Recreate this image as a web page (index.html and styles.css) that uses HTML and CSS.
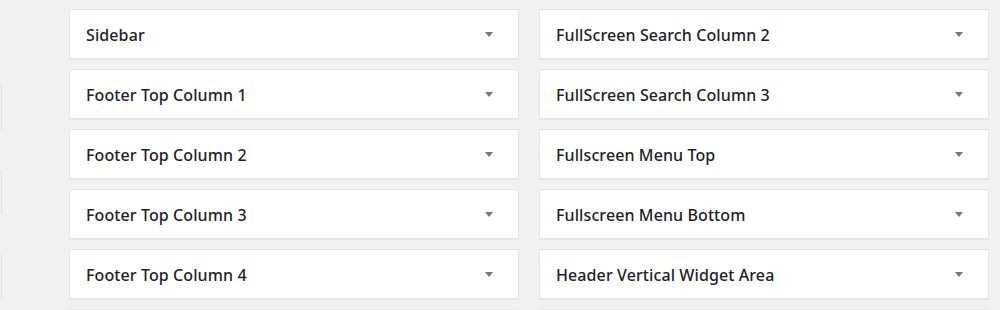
FILE: index.html
```html
<!DOCTYPE html>
<html>
<head>
<meta charset="utf-8">
<link rel="stylesheet" href="styles.css">
</head>
<body>
<div class="page">
  <div class="edge">
    <div class="edge-item e1"></div>
    <div class="edge-item"></div>
    <div class="edge-item"></div>
  </div>
  <div class="grid">
    <div class="col">
      <div class="card"><h2>Sidebar</h2><span class="arrow"></span></div>
      <div class="card"><h2>Footer Top Column 1</h2><span class="arrow"></span></div>
      <div class="card"><h2>Footer Top Column 2</h2><span class="arrow"></span></div>
      <div class="card"><h2>Footer Top Column 3</h2><span class="arrow"></span></div>
      <div class="card"><h2>Footer Top Column 4</h2><span class="arrow"></span></div>
      <div class="card"><h2>&nbsp;</h2></div>
    </div>
    <div class="col">
      <div class="card"><h2>FullScreen Search Column 2</h2><span class="arrow"></span></div>
      <div class="card"><h2>FullScreen Search Column 3</h2><span class="arrow"></span></div>
      <div class="card"><h2>Fullscreen Menu Top</h2><span class="arrow"></span></div>
      <div class="card"><h2>Fullscreen Menu Bottom</h2><span class="arrow"></span></div>
      <div class="card"><h2>Header Vertical Widget Area</h2><span class="arrow"></span></div>
      <div class="card"><h2>&nbsp;</h2></div>
    </div>
  </div>
</div>
</body>
</html>
```
FILE: styles.css
```css
html, body {
  margin: 0;
  padding: 0;
  background: #f1f1f1;
  height: 310px;
  overflow: hidden;
}
.page {
  display: flex;
  font-family: "Noto Sans", "Open Sans", sans-serif;
}
.edge {
  width: 69px;
  display: flex;
  flex-direction: column;
  gap: 40px;
  padding-top: 83px;
  box-sizing: border-box;
}
.edge-item {
  width: 2px;
  height: 45px;
  border-right: 1px solid #e2e2e2;
  box-sizing: border-box;
}
.edge-item.e1 { height: 47px; }
.grid {
  display: flex;
  gap: 20px;
  padding-top: 9px;
}
.col {
  width: 450px;
  display: flex;
  flex-direction: column;
  gap: 10px;
}
.card {
  height: 50px;
  box-sizing: border-box;
  background: #fff;
  border: 1px solid #e5e5e5;
  box-shadow: 0 1px 1px rgba(0,0,0,.04);
  display: flex;
  align-items: center;
  justify-content: space-between;
  padding: 0 25px 0 16px;
}
.card h2 {
  margin: 0;
  font-size: 16px;
  font-weight: 500;
  letter-spacing: 0.1px;
  color: #1d2327;
  padding-top: 1px;
}
.arrow {
  width: 0;
  height: 0;
  border-left: 4px solid transparent;
  border-right: 4px solid transparent;
  border-top: 5px solid #72777c;
  margin-top: 1px;
}
```
